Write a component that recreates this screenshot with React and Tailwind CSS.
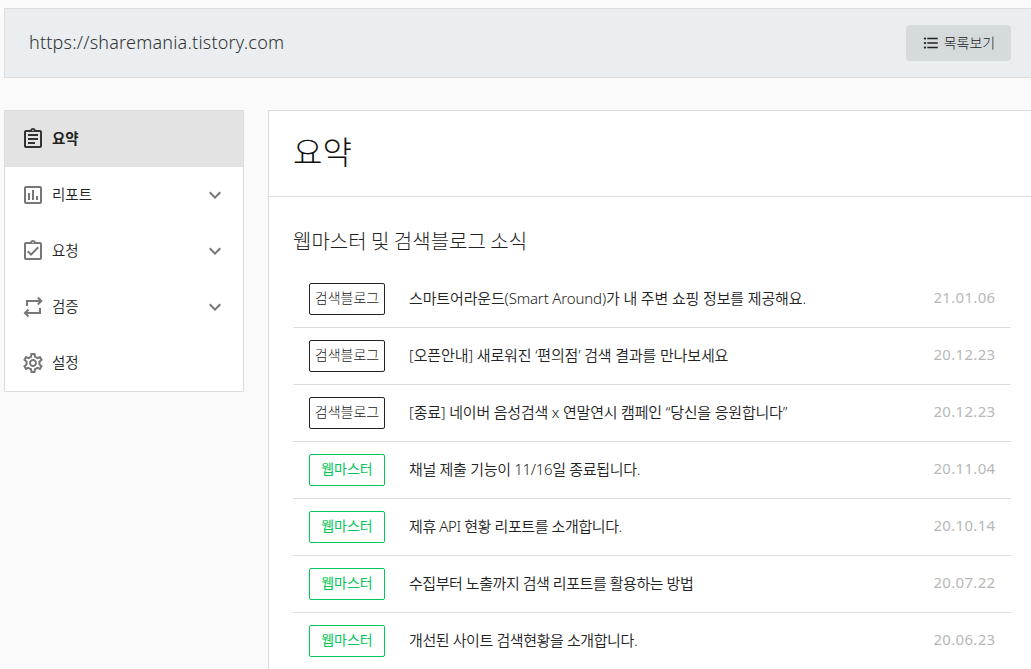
import React from 'react';
import {
    MdOutlineAssignment,
    MdOutlineAssignmentTurnedIn,
    MdOutlinePoll,
    MdOutlineSettings,
    MdFormatListBulleted,
    MdKeyboardArrowDown,
} from 'react-icons/md';

function RepeatIcon({ size = 24, className }) {
    return (
        <svg width={size} height={size} viewBox="0 0 24 24" fill="none" stroke="currentColor" strokeWidth="2" className={className}>
            <path d="M6 11V6h14M16.8 2.5L20.3 6l-3.5 3.5" />
            <path d="M19 13v5H4.5M7.5 14.5L4 18l3.5 3.5" />
        </svg>
    );
}

const menu = [
    { label: '요약', icon: MdOutlineAssignment, active: true },
    { label: '리포트', icon: MdOutlinePoll, expandable: true },
    { label: '요청', icon: MdOutlineAssignmentTurnedIn, expandable: true },
    { label: '검증', icon: RepeatIcon, expandable: true },
    { label: '설정', icon: MdOutlineSettings },
];

const news = [
    { tag: '검색블로그', title: '스마트어라운드(Smart Around)가 내 주변 쇼핑 정보를 제공해요.', date: '21.01.06', spacing: 'tracking-[-0.14px]' },
    { tag: '검색블로그', title: '[오픈안내] 새로워진 ‘편의점’ 검색 결과를 만나보세요', date: '20.12.23', spacing: 'tracking-[-0.14px]' },
    { tag: '검색블로그', title: '[종료] 네이버 음성검색 x 연말연시 캠페인 “당신을 응원합니다”', date: '20.12.23', spacing: 'tracking-[-0.19px]' },
    { tag: '웹마스터', title: '채널 제출 기능이 11/16일 종료됩니다.', date: '20.11.04', spacing: 'tracking-[-0.3px]' },
    { tag: '웹마스터', title: '제휴 API 현황 리포트를 소개합니다.', date: '20.10.14', spacing: 'tracking-[-0.4px]' },
    { tag: '웹마스터', title: '수집부터 노출까지 검색 리포트를 활용하는 방법', date: '20.07.22', spacing: 'tracking-[-0.45px]' },
    { tag: '웹마스터', title: '개선된 사이트 검색현황을 소개합니다.', date: '20.06.23', spacing: 'tracking-[-0.4px]' },
];

function Header() {
    return (
        <header className="flex h-[70px] items-center justify-between border border-r-0 border-[#dcdcdc] bg-[#eaeef1] pl-6 pr-5">
            <span className="pb-px font-['Noto_Sans','Noto_Sans_CJK_KR',sans-serif] text-[18px] font-light text-[#333] tracking-[0.2px]">
                https://sharemania.tistory.com
            </span>
            <button className="flex h-9 w-[105px] items-center justify-center gap-1 rounded bg-[#d5dadd] text-sm font-light text-[#222]">
                <MdFormatListBulleted size={18} />
                <span className="pb-0.5">목록보기</span>
            </button>
        </header>
    );
}

function Sidebar() {
    return (
        <nav className="h-[282px] w-60 shrink-0 border border-[#dcdcdc] bg-white">
            {menu.map(({ label, icon: Icon, active, expandable }) => (
                <div
                    key={label}
                    className={`flex h-14 items-center pl-4 pr-4 text-[14.5px] text-[#222] ${active ? 'bg-[#e3e3e3] font-bold' : 'font-[350]'}`}
                >
                    <Icon size={24} className={active ? 'text-[#333]' : 'text-[#777]'} />
                    <span className="ml-[7px] pb-[3px]">{label}</span>
                    {expandable && <MdKeyboardArrowDown size={24} className="ml-auto text-[#777]" />}
                </div>
            ))}
        </nav>
    );
}

function NewsRow({ tag, title, date, spacing }) {
    const green = tag === '웹마스터';
    return (
        <li className="flex h-[57px] items-center border-b border-[#dcdcdc] pl-4 pr-4">
            <span
                className={`flex h-8 w-[76px] shrink-0 items-center justify-center rounded-[2px] border pb-[3px] text-[14px] ${green ? 'border-[#03c75a] text-[#03c75a]' : 'border-[#222] font-light text-[#222]'}`}
            >
                {tag}
            </span>
            <span className={`ml-6 whitespace-nowrap pb-px font-['Noto_Sans','Noto_Sans_CJK_KR',sans-serif] text-[15px] font-[350] text-[#222] ${spacing}`}>
                {title}
            </span>
            <span className="-mr-[0.4px] ml-auto pb-[3px] font-['Noto_Sans',sans-serif] text-[15px] text-[#b8b8b8] tracking-[0.3px]">{date}</span>
        </li>
    );
}

export default function App() {
    return (
        <div className="h-[669px] overflow-hidden bg-[#fafafa] pl-1 pt-2 font-['Noto_Sans_CJK_KR',sans-serif]">
            <Header />
            <div className="mt-8 flex items-start gap-6">
                <Sidebar />
                <main className="h-[600px] flex-1 border border-r-0 border-[#dcdcdc] bg-white">
                    <h1 className="flex h-[86px] items-center border-b border-[#dcdcdc] pb-[7px] pl-6 text-[32px] font-light text-[#111]">요약</h1>
                    <section className="pl-6 pr-5 pt-[29px]">
                        <h2 className="text-xl leading-[30px] font-light text-[#222]">웹마스터 및 검색블로그 소식</h2>
                        <ul className="mt-[15px]">
                            {news.map((item) => (
                                <NewsRow key={item.title} {...item} />
                            ))}
                        </ul>
                    </section>
                </main>
            </div>
        </div>
    );
}
